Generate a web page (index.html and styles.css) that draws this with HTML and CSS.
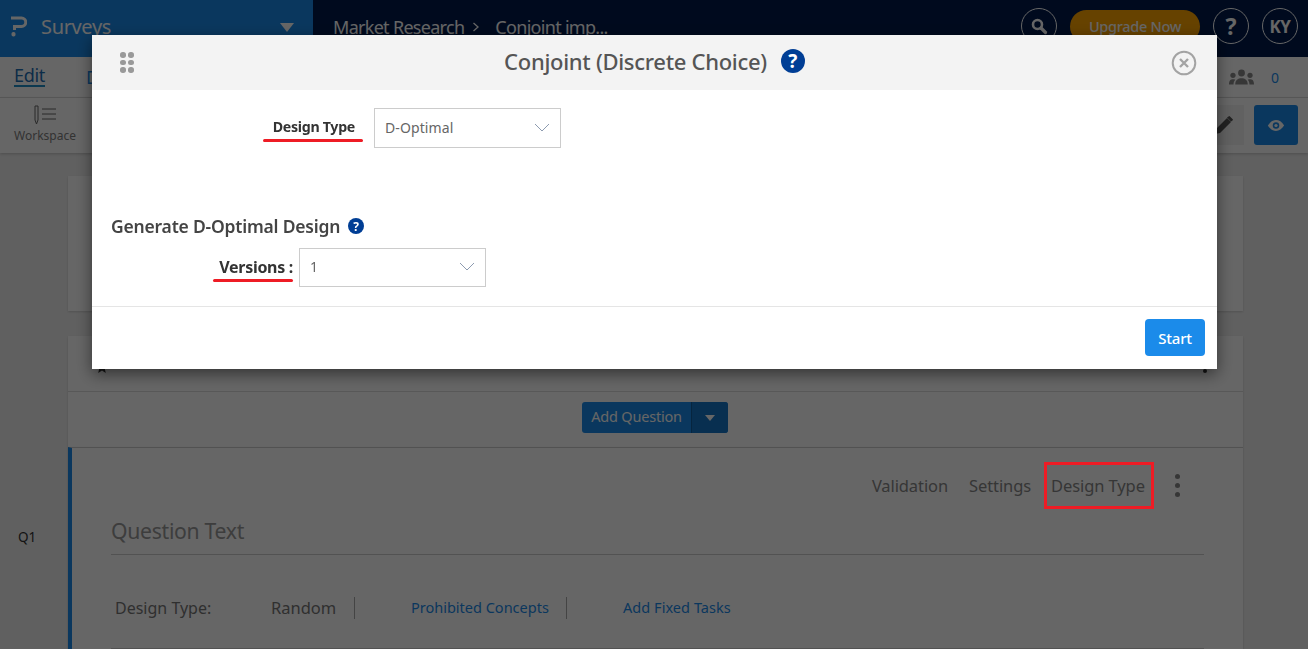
FILE: index.html
```html
<!DOCTYPE html>
<html lang="en">
<head>
<meta charset="utf-8">
<title>Conjoint (Discrete Choice)</title>
<link rel="stylesheet" href="styles.css">
</head>
<body>
<div class="page">
  <header class="topbar">
    <div class="brand">
      <svg class="logo" width="16" height="21" viewBox="0 0 16 21"><path d="M0 2H10.500A4.250 4.250 0 0 1 10.500 10.500H3.500V14" fill="none" stroke="#fff" stroke-width="3"/><rect x="0.500" y="16" width="4" height="4.500" rx="1.800" fill="#fff"/></svg>
      <span class="brand-name">Surveys</span>
      <span class="caret-big"></span>
    </div>
    <nav class="crumbs"><span>Market Research</span><svg width="8" height="12" viewBox="0 0 8 12"><path d="M1.500 2 6 6 1.500 10" fill="none" stroke="#fff" stroke-width="1.300"/></svg><span>Conjoint imp...</span></nav>
    <div class="top-actions">
      <span class="round"><svg width="18" height="18" viewBox="0 0 18 18"><circle cx="7.500" cy="7.500" r="4.500" fill="none" stroke="#fff" stroke-width="2.600"/><path d="M11 11l4.500 4.500" stroke="#fff" stroke-width="3.200" stroke-linecap="round"/></svg></span>
      <span class="upgrade">Upgrade Now</span>
      <span class="round round-q">?</span>
      <span class="round round-k">KY</span>
    </div>
  </header>
  <div class="tabs">
    <span class="tab tab-active">Edit</span>
    <span class="tab">Distribute</span>
    <span class="tabs-right">
      <svg width="25" height="16" viewBox="0 0 22 14"><circle cx="11" cy="3.500" r="3" fill="#8a8a8a"/><circle cx="3.500" cy="5.500" r="2.300" fill="#8a8a8a"/><circle cx="18.500" cy="5.500" r="2.300" fill="#8a8a8a"/><path d="M5.500 13.500C5.500 9.500 8 8 11 8s5.500 1.500 5.500 5.500ZM0 13.500C0 10 1.500 9 3.500 9c.7 0 1.400.1 2 .5-1 1-1.500 2.400-1.500 4ZM22 13.500C22 10 20.500 9 18.500 9c-.7 0-1.400.1-2 .5 1 1 1.500 2.400 1.500 4Z" fill="#8a8a8a"/></svg>
      <span class="count">0</span>
    </span>
  </div>
  <div class="toolbar">
    <div class="tool">
      <svg width="24" height="20" viewBox="0 0 24 20"><path d="M2 1h3v14l-1.500 4L2 15Z" fill="none" stroke="#666" stroke-width="1"/><path d="M9 4h14M9 9h14M9 14h14" stroke="#666" stroke-width="1"/></svg>
      <span>Workspace</span>
    </div>
    <div class="tool-right">
      <span class="pen"><svg width="20" height="20" viewBox="0 0 20 20"><path d="M1 19l1-5L13 3l4 4L6 18ZM14.500 1.500l1-.5 3.500 3.500-.5 1-1.500 1-4-4Z" fill="#555"/></svg></span>
      <span class="eye"><svg width="18" height="13" viewBox="0 0 20 14"><path d="M1 7c2.500-4 5.500-6 9-6s6.500 2 9 6c-2.500 4-5.500 6-9 6S3.500 11 1 7Z" fill="#fff"/><circle cx="10" cy="7" r="3.600" fill="#1b8bea"/><circle cx="10" cy="7" r="1.800" fill="#fff"/></svg></span>
    </div>
  </div>
  <main class="content">
    <section class="card card-top"></section>
    <section class="card card-mid">
      <div class="mid-head">
        <svg width="12" height="14" viewBox="0 0 14 14"><path d="M7 0l2 4.800 5 .4-3.800 3.300L11.400 14 7 11.200 2.600 14l1.200-5.500L0 5.200l5-.4Z" fill="#333"/></svg>
        <span class="mid-kebab"><i></i><i></i><i></i></span>
      </div>
      <div class="mid-add">
        <span class="add-btn"><span class="add-label">Add Question</span><span class="add-caret"><i></i></span></span>
      </div>
    </section>
    <div class="q-row">
      <div class="q-num">Q1</div>
      <section class="q-card">
        <div class="q-links">
          <span>Validation</span>
          <span>Settings</span>
          <span class="q-boxed">Design Type</span>
          <span class="kebab"><i></i><i></i><i></i></span>
        </div>
        <div class="q-text">Question Text</div>
        <div class="q-design">
          <span class="qd-label">Design Type:</span>
          <span class="qd-value">Random</span>
          <a class="qd-link qd-one">Prohibited Concepts</a>
          <a class="qd-link qd-two">Add Fixed Tasks</a>
        </div>
        <div class="q-rule"></div>
      </section>
    </div>
  </main>
</div>
<div class="overlay">
  <div class="modal">
    <div class="modal-head">
      <span class="grip"><i></i><i></i><i></i><i></i><i></i><i></i></span>
      <div class="modal-title"><span>Conjoint (Discrete Choice)</span><span class="help help-big">?</span></div>
      <svg class="close" width="26" height="26" viewBox="0 0 26 26"><circle cx="13" cy="13" r="11.300" fill="none" stroke="#a3a3a3" stroke-width="2"/><path d="M9 9l8 8M17 9l-8 8" stroke="#a3a3a3" stroke-width="2.400"/></svg>
    </div>
    <div class="modal-body">
      <div class="field field-type">
        <label class="field-label">Design Type</label>
        <div class="select select-type"><span>D-Optimal</span><svg width="16" height="9" viewBox="0 0 16 9"><path d="M1 1l7 7 7-7" fill="none" stroke="#8d9bb0" stroke-width="1"/></svg></div>
      </div>
      <h3 class="gen-title"><span>Generate D-Optimal Design</span><span class="help help-small">?</span></h3>
      <div class="field field-versions">
        <label class="field-label">Versions :</label>
        <div class="select select-ver"><span>1</span><svg width="16" height="9" viewBox="0 0 16 9"><path d="M1 1l7 7 7-7" fill="none" stroke="#8d9bb0" stroke-width="1"/></svg></div>
      </div>
    </div>
    <div class="modal-foot"><button class="start">Start</button></div>
  </div>
  <div class="annot-box"></div>
</div>
</body>
</html>
```

FILE: styles.css
```css
* { box-sizing: border-box; }
html, body { margin: 0; height: 649px; overflow: hidden; }
body { font-family: "Noto Sans", "Liberation Sans", sans-serif; background: #f0f0f0; color: #333; position: relative; }
.page { height: 649px; overflow: hidden; }

.topbar { height: 57px; background: #001a4b; display: flex; align-items: center; color: #fff; }
.brand { width: 313px; height: 57px; background: #1b8bea; display: flex; align-items: center; padding: 0 19px 0 11px; }
.logo { margin-top: -4px; flex: none; }
.brand-name { font-size: 20px; letter-spacing: -0.35px; margin-left: 14px; flex: 1; margin-top: -4px; }
.caret-big { width: 0; height: 0; border-left: 7px solid transparent; border-right: 7px solid transparent; border-top: 9px solid #fff; margin-top: -3px; }
.crumbs { display: flex; align-items: center; gap: 8px; margin-left: 20px; font-size: 18px; letter-spacing: -0.7px; margin-top: -4px; }
.crumbs span + svg + span { margin-left: 7px; }
.top-actions { margin-left: auto; display: flex; align-items: center; gap: 13px; padding-right: 10px; margin-top: -5px; }
.round { width: 36px; height: 36px; border: 1px solid #fff; border-radius: 50%; display: flex; align-items: center; justify-content: center; font-weight: 700; }
.round-q { font-size: 23px; }
.round-k { font-size: 17px; letter-spacing: -0.5px; }
.upgrade { width: 130px; height: 33px; padding-bottom: 1px; border-radius: 17px; background: #ffa500; display: flex; align-items: center; justify-content: center; font-size: 14.500px; font-weight: 500; letter-spacing: -0.3px; }

.tabs { height: 41px; background: #fff; border-bottom: 1px solid #ddd; display: flex; align-items: center; padding-left: 14px; gap: 41px; }
.tab { font-size: 18px; color: #1b8bea; letter-spacing: -0.3px; }
.tab-active { color: #1f6fb5; border-bottom: 2px solid #1f8fc8; line-height: 20px; margin-top: -2px; }
.tabs-right { margin-left: auto; display: flex; align-items: center; gap: 17px; padding-right: 29px; }
.count { font-size: 14px; color: #1b8bea; }

.toolbar { height: 55px; background: #fff; display: flex; align-items: flex-start; padding: 7px 10px 0 14px; box-shadow: 0 1px 3px rgba(0,0,0,.2); position: relative; }
.tool { display: flex; flex-direction: column; align-items: center; width: 62px; font-size: 12px; color: #808080; gap: 2px; }
.tool-right { margin-left: auto; display: flex; gap: 10px; }
.pen { width: 40px; height: 40px; display: flex; align-items: center; justify-content: center; background: #f3f3f3; }
.eye { width: 44px; height: 40px; border-radius: 3px; background: #1b8bea; display: flex; align-items: center; justify-content: center; }

.content { padding-top: 23px; }
.card { background: #fff; margin-left: 68px; width: 1175px; box-shadow: 0 1px 2px rgba(0,0,0,.15); }
.card-top { height: 135px; }
.card-mid { height: 111px; margin-top: 25px; }
.mid-head { height: 56px; border-bottom: 1px solid #ddd; display: flex; justify-content: space-between; align-items: flex-start; padding: 24px 36px 0 28px; }
.mid-kebab { display: flex; flex-direction: column; gap: 3px; margin-top: -5px; }
.mid-kebab i { width: 4px; height: 4px; border-radius: 50%; background: #333; }
.mid-add { display: flex; justify-content: center; padding-top: 10px; padding-right: 1px; }
.add-btn { display: flex; height: 31px; border-radius: 3px; background: #1b8bea; color: #fff; font-size: 14.500px; overflow: hidden; }
.add-label { line-height: 28px; letter-spacing: -0.2px; width: 109px; text-align: center; white-space: nowrap; }
.add-caret { width: 37px; background: #1677c9; border-left: 1px solid #0f5e9f; display: flex; align-items: center; justify-content: center; }
.add-caret i { width: 0; height: 0; border-left: 5px solid transparent; border-right: 5px solid transparent; border-top: 6px solid #fff; }

.q-row { display: flex; }
.q-num { width: 68px; padding: 81px 0 0 18px; font-size: 13.500px; color: #333; }
.q-card { width: 1175px; height: 210px; background: #fff; border-left: 4px solid #1b8bea; border-top: 1px solid #ccc; padding: 14px 39px 0 39px; box-shadow: 0 1px 2px rgba(0,0,0,.2); }
.q-links { display: flex; justify-content: flex-end; align-items: center; height: 47px; font-size: 16.500px; color: #888; letter-spacing: -0.1px; padding-right: 24px; }
.q-links > span { margin-left: 21px; }
.q-boxed { width: 110px; display: flex; align-items: center; justify-content: center; margin-left: 12px !important; }
.kebab { display: flex; flex-direction: column; gap: 4px; width: 5px; margin-left: 22px !important; }
.kebab i { width: 5px; height: 5px; border-radius: 50%; background: #888; }
.q-text { margin-top: 6px; height: 40px; border-bottom: 1px solid #ccc; font-size: 21.200px; color: #999; letter-spacing: -0.3px; line-height: 32px; }
.q-design { display: flex; align-items: center; height: 22px; margin-top: 42px; font-size: 16px; }
.qd-label { margin-left: 4px; width: 156px; color: #777; }
.qd-value { width: 84px; color: #777; font-size: 16.500px; border-right: 1px solid #aaa; height: 22px; line-height: 22px; }
.qd-link { font-size: 14.500px; color: #1b8bea; margin-top: 0; }
.qd-one { margin-left: 56px; width: 156px; border-right: 1px solid #aaa; height: 22px; line-height: 20px; letter-spacing: 0; }
.qd-two { margin-left: 56px; height: 22px; line-height: 20px; letter-spacing: 0.05px; }
.q-rule { margin-top: 29px; border-top: 1px solid #ccc; }

.overlay { position: fixed; inset: 0; background: rgba(0,0,0,.6); }
.annot-box { position: absolute; left: 1044px; top: 462px; width: 110px; height: 47px; border: 3px solid #ee1c25; }
.modal { position: absolute; left: 92px; top: 35px; width: 1125px; height: 334px; background: #fff; box-shadow: 0 5px 15px rgba(0,0,0,.5); display: flex; flex-direction: column; }
.modal-head { height: 55px; background: #f3f3f3; display: flex; align-items: center; padding: 0 20px 0 28px; }
.grip { display: grid; grid-template-columns: 5px 5px; gap: 2px 3px; width: 14px; }
.grip i { width: 5.500px; height: 5.500px; border-radius: 50%; background: #999; }
.modal-title { flex: 1; display: flex; justify-content: center; align-items: center; gap: 14px; font-size: 22px; font-weight: 500; color: #555; letter-spacing: -0.3px; padding-left: 4px; padding-bottom: 3px; }
.help { background: #003e95; color: #fff; border-radius: 50%; display: inline-flex; align-items: center; justify-content: center; font-weight: 700; letter-spacing: 0; }
.help-big { width: 24px; height: 24px; font-size: 19px; }
.help-small { width: 16px; height: 16px; font-size: 12px; }
.close { display: block; }
.modal-body { flex: 1; padding: 18px 0 0 0; border-bottom: 1px solid #e5e5e5; }
.field { display: flex; align-items: center; justify-content: flex-end; }
.field-label { font-weight: 700; font-size: 14.200px; color: #333; letter-spacing: -0.3px; position: relative; text-align: right; white-space: nowrap; padding-bottom: 4px; }
.field-label::after { content: ""; position: absolute; height: 3px; background: #ee1c25; border-radius: 2px; }
.field-type { width: 469px; height: 40px; }
.field-type .field-label { margin-right: 19px; }
.field-type .field-label::after { left: -10px; right: -8px; bottom: -2px; }
.field-versions { width: 394px; height: 39px; margin-top: 10px; }
.field-versions .field-label { margin-right: 6px; font-size: 16px; padding-bottom: 2px; }
.field-versions .field-label::after { left: -6px; right: 0; bottom: -2px; }
.select { border: 1px solid #ccc; display: flex; align-items: center; justify-content: space-between; font-size: 14px; letter-spacing: 0.1px; color: #666; padding: 0 10px 2px; background: #fff; height: 100%; }
.select-type { width: 187px; }
.select-ver { width: 187px; }
.gen-title { margin: 66px 0 0 19px; height: 24px; font-size: 17.500px; font-weight: 600; color: #444; display: flex; align-items: center; gap: 8px; letter-spacing: -0.2px; }
.modal-foot { height: 62px; display: flex; justify-content: flex-end; align-items: center; padding-right: 12px; padding-bottom: 1px; }
.start { width: 60px; height: 37px; background: #1b8bea; color: #fff; border: 0; border-radius: 4px; font: 500 15px "Noto Sans", "Liberation Sans", sans-serif; letter-spacing: -0.2px; }
```
